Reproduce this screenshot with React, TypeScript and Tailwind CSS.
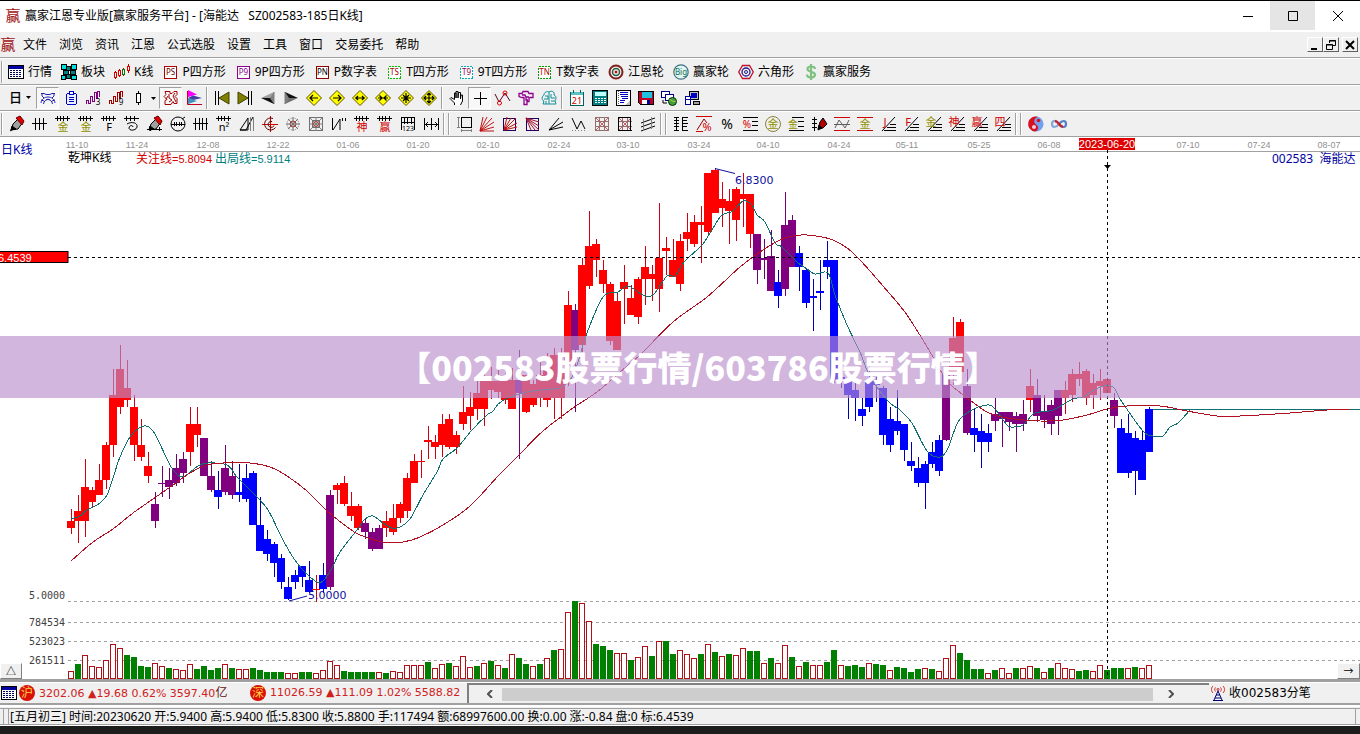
import type { ReactNode } from 'react';

const uiFont = 'font-["Noto_Sans","Noto_Sans_CJK_SC",sans-serif]';

const menus = ['文件', '浏览', '资讯', '江恩', '公式选股', '设置', '工具', '窗口', '交易委托', '帮助'];

const dates: [string, number][] = [
  ['11-10', 77], ['11-24', 137], ['12-08', 208], ['12-22', 278], ['01-06', 348], ['01-20', 418],
  ['02-10', 488], ['02-24', 559], ['03-10', 628], ['03-24', 699], ['04-10', 768], ['04-24', 839],
  ['05-11', 907], ['05-25', 979], ['06-08', 1049], ['07-10', 1188], ['07-24', 1259], ['08-07', 1329],
];

// kind, high, low, body top, body bottom
const candles = `
r 509 534 521 528|r 495 543 511 521|r 459 537 487 521|r 487 507 490 502|r 464 495 480 495
r 442 489 445 480|r 369 457 395 445|r 345 414 369 407|r 360 407 388 400|r 395 461 407 445
r 419 461 445 457|r 452 483 466 476|p 492 528 504 521|p 466 497 483 484|p 468 499 480 487
p 454 486 468 483|p 452 483 459 473|r 407 466 424 452|r 407 447 424 435|p 438 476 438 476
p 461 492 476 490|b 471 509 490 497|p 445 495 468 492|p 461 499 476 495|b 464 502 492 495
b 464 502 478 499|b 471 525 473 525|b 497 551 525 551|b 530 561 539 554|b 542 577 544 563
b 554 589 558 582|b 577 600 587 599|b 570 589 575 582|b 566 587 566 577|b 561 593 580 592
r 575 602 589 590|b 563 593 575 589|p 490 590 495 587|r 483 504 485 490|r 476 506 483 504
r 492 521 506 516|r 504 530 506 528|p 519 539 523 532|p 528 551 532 549|p 525 549 528 549
r 511 537 521 528|r 504 535 518 532|r 502 523 504 518|r 473 518 478 511|r 454 483 461 483
r 450 478 461 462|r 426 459 440 442|r 435 459 442 447|r 414 457 424 445|r 414 449 419 447
r 431 454 435 447|r 386 430 412 424|r 392 430 407 416|r 380 420 393 409|r 374 426 380 409
r 367 399 381 390|r 366 398 381 392|r 373 404 381 400|r 368 409 380 409|p 350 459 380 393
r 375 413 375 412|r 380 407 384 405|r 362 407 375 398|r 353 407 368 400|r 348 419 355 398
r 348 419 370 398|r 291 386 305 365|p 304 412 310 350|r 258 352 265 345|r 211 289 246 286
r 239 277 244 260|r 260 293 270 284|r 282 345 284 341|r 292 350 301 350|r 265 324 282 289
r 285 315 298 315|r 277 324 279 317|r 246 305 267 279|r 265 301 274 279|r 203 312 258 289
r 237 275 248 251|r 239 277 260 277|r 234 291 241 284|r 213 251 232 239|r 215 247 222 244
r 206 263 222 225|r 173 236 173 232|r 168 213 170 213|r 182 227 199 208|r 189 244 201 211
r 187 241 189 220|r 173 227 194 199|r 194 248 194 234|p 234 284 234 270|p 239 279 258 260
p 230 291 256 291|b 270 308 282 296|p 192 296 225 289|p 215 267 220 267|b 246 291 253 267
b 268 308 270 303|b 279 331 296 298|b 260 310 291 293|b 241 279 260 267|b 260 383 260 380
b 370 388 377 382|b 377 419 380 395|b 380 421 390 398|b 398 426 409 416|b 365 412 380 407
b 377 402 382 385|b 386 445 388 435|b 407 452 419 445|b 390 435 421 431|b 424 461 424 450
b 442 471 461 466|b 457 487 468 483|b 461 509 464 483|b 442 468 452 464|b 435 476 440 471
p 370 441 375 440|r 317 385 338 375|r 319 384 322 372|p 369 435 386 433|b 409 452 428 435
b 414 468 431 442|b 424 452 433 442|p 398 431 414 421|p 412 447 412 419|p 412 431 412 422
p 412 452 416 424|p 400 431 414 424|r 369 412 386 400|p 379 422 395 416|p 395 428 411 420
p 400 435 405 424|p 390 435 390 416|r 381 414 390 398|r 369 402 374 395|r 362 386 374 379
r 369 405 371 398|r 374 409 383 395|r 369 400 381 386|r 379 393 379 393|p 393 428 400 416
b 419 473 428 473|b 414 478 433 473|b 431 495 438 471|b 431 480 440 480|b 407 452 409 452`
  .trim()
  .split(/[|\n]/)
  .map((row) => {
    const [kind, ...v] = row.trim().split(' ');
    const [high, low, top, bottom] = v.map(Number);
    return { kind, high, low, top, bottom };
  });

// r = hollow up bar, g = solid down bar, number = top of the bar
const volumes = `
r671 g664 r655 r666 r667 r660 r644 r648 g655 g657 g666 g667 r663 r666 g668 r669 r670 r664 g669 g666
g670 g668 r664 g668 r669 r669 g668 g670 g672 g672 g672 r673 r673 g672 g672 r673 r670 r661 r665 g671
g672 g672 g672 g672 r672 g673 r671 r672 r665 r665 r665 g662 r668 r664 g663 r666 r656 r667 g666 r663
g661 r665 g668 r654 g658 g664 r666 g664 r658 g650 r649 r612 g601 r603 r621 g644 g646 g650 r653 r653
g660 r657 r646 g656 r641 g641 g654 r650 r654 r658 g654 r644 g652 r656 g654 r655 r648 g651 g651 r663
g658 r663 r645 g657 r666 g662 r665 r665 g662 g650 r665 g666 g665 g667 r663 g664 g665 r670 g667 g668
g672 g669 r668 g669 r671 r658 r645 g653 g660 g669 g669 r673 g670 r668 r673 g668 r668 r666 g668 r672
g668 r663 r668 r669 g671 g670 r671 r665 g670 g668 g668 r668 g667 r668 r665`
  .trim()
  .split(/\s+/);

const slowLine =
  '71,561 93,542 113,529 133,513 153,499 173,485 190,473 207,465 223,463 250,463 270,467 287,476 307,491 327,511 350,529 360,535 383,542 403,542 420,537 443,525 470,506 500,474 520,454 543,431 573,408 597,392 620,372 640,355 673,322 707,297 740,267 760,252 780,240 793,236 807,235 830,239 847,248 860,260 883,286 907,315 933,357 943,375 952,386 970,400 987,412 1007,418 1040,421 1063,420 1087,415 1107,409 1127,406 1160,406 1187,411 1217,416 1240,416 1290,413 1327,410 1350,410';

const fastLine =
  '71,519 80,516 87,510 100,503 107,495 113,478 120,457 130,437 141,427 149,427 156,436 170,465 178,475 185,476 198,466 208,463 227,465 237,477 253,493 268,510 283,540 297,563 315,581 323,581 332,568 340,552 357,530 365,519 373,516 383,523 392,528 400,527 410,519 423,495 437,472 443,459 457,448 472,430 487,415 493,411 502,401 527,392 553,389 560,388 570,380 577,365 587,333 603,297 618,292 628,286 643,295 653,295 667,276 675,276 685,261 702,245 713,228 722,215 733,211 743,201 752,205 757,215 765,222 775,243 782,247 797,262 807,269 815,274 828,273 835,295 847,325 860,352 867,370 877,387 890,403 900,410 912,423 927,451 940,457 948,448 958,422 970,411 987,405 995,409 1007,425 1013,427 1023,425 1033,414 1040,412 1053,410 1073,399 1083,397 1100,387 1113,387 1122,402 1143,431 1153,436 1163,436 1170,427 1178,423 1190,410';

// rounds the corners of a list of points into one smooth path
function smooth(points: string) {
  const p = points.split(' ').map((s) => s.split(',').map(Number));
  let d = `M${p[0][0]} ${p[0][1]}`;
  for (let i = 0; i < p.length - 1; i++) {
    const a = p[i - 1] ?? p[i];
    const b = p[i];
    const c = p[i + 1];
    const e = p[i + 2] ?? c;
    d += `C${b[0] + (c[0] - a[0]) / 6} ${b[1] + (c[1] - a[1]) / 6} ${c[0] - (e[0] - b[0]) / 6} ${c[1] - (e[1] - b[1]) / 6} ${c[0]} ${c[1]}`;
  }
  return d;
}

const fills: Record<string, string> = { r: '#ff0000', p: '#800080', b: '#0000ff' };
const wicks: Record<string, string> = { r: '#d00010', p: '#700070', b: '#0000b0' };

function Ico({ children, crisp = true }: { children: ReactNode; crisp?: boolean }) {
  return (
    <svg
      viewBox="0 0 16 16"
      className="h-4 w-4 shrink-0 overflow-visible"
      fill="none"
      stroke="#000"
      aria-hidden="true"
      shapeRendering={crisp ? 'crispEdges' : 'auto'}
    >
      {children}
    </svg>
  );
}

// single glyph used as part of an icon
function Glyph({ x = 8, y = 14, size = 9, color = '#000', children }: { x?: number; y?: number; size?: number; color?: string; children: ReactNode }) {
  return (
    <text x={x} y={y} fontSize={size} fill={color} stroke="none" textAnchor="middle" className={uiFont}>
      {children}
    </text>
  );
}

const Win = () => <Ico><Glyph size={15} y={13} color="#a01010">赢</Glyph></Ico>;

const TableIcon = () => (
  <Ico>
    <rect x="0" y="1" width="16" height="14" fill="#000" stroke="none" />
    <rect x="1" y="2" width="14" height="12" fill="#fff" stroke="none" />
    <rect x="1" y="2" width="14" height="3" fill="#0000a0" stroke="none" />
    <path d="M2 6.500h12M2 8.500h12M2 10.500h12M2 12.500h12" stroke="#000060" strokeDasharray="2 1" />
  </Ico>
);

const Tag = ({ text, color, ink, dashed = false }: { text: string; color: string; ink: string; dashed?: boolean }) => (
  <Ico>
    <rect x="2.500" y="2.500" width="12" height="12" fill="#fff" stroke={color} strokeDasharray={dashed ? '2 1' : undefined} />
    <Glyph x={8.5} y={11} size={8} color={ink}>{text}</Glyph>
  </Ico>
);

const mainTools: { label: string; icon: ReactNode }[] = [
  { label: '行情', icon: <TableIcon /> },
  {
    label: '板块',
    icon: (
      <Ico>
        <g fill="#008080">
          <rect x="0.500" y="0.500" width="5" height="5" fill="#00e0e0" /><rect x="5.500" y="2.500" width="4" height="4" />
          <rect x="10.500" y="0.500" width="5" height="5" fill="#00e0e0" /><rect x="2.500" y="6.500" width="5" height="4" />
          <rect x="9.500" y="6.500" width="5" height="4" /><rect x="0.500" y="11.500" width="4" height="4" fill="#00e0e0" />
          <rect x="5.500" y="10.500" width="4" height="4" /><rect x="10.500" y="11.500" width="5" height="4" fill="#00e0e0" />
        </g>
      </Ico>
    ),
  },
  {
    label: 'K线',
    icon: (
      <Ico>
        <path d="M1.500 7v8M5.500 5v8M9.500 4v8M14.500 0v9" stroke="#c00000" />
        <rect x="0.500" y="8.500" width="2" height="5" fill="#fff" stroke="#e00000" />
        <rect x="4.500" y="6.500" width="2" height="5" fill="#fff" stroke="#e00000" />
        <rect x="8.500" y="5.500" width="2" height="5" fill="#fff" stroke="#008000" />
        <rect x="13.500" y="2.500" width="2" height="4" fill="#fff" stroke="#e00000" />
      </Ico>
    ),
  },
  { label: 'P四方形', icon: <Tag text="PS" color="#b00000" ink="#600000" /> },
  { label: '9P四方形', icon: <Tag text="P9" color="#900090" ink="#900090" /> },
  { label: 'P数字表', icon: <Tag text="PN" color="#900000" ink="#000" /> },
  { label: 'T四方形', icon: <Tag text="TS" color="#00c000" ink="#a00000" dashed /> },
  { label: '9T四方形', icon: <Tag text="T9" color="#00b0b0" ink="#900050" dashed /> },
  { label: 'T数字表', icon: <Tag text="TN" color="#00a000" ink="#b00000" dashed /> },
  {
    label: '江恩轮',
    icon: (
      <Ico crisp={false}>
        <circle cx="8" cy="8" r="6.500" stroke="#802020" strokeWidth="2" />
        <circle cx="8" cy="8" r="3.500" stroke="#206040" strokeWidth="1.500" />
        <circle cx="8" cy="8" r="1" fill="#c00000" stroke="#c00000" />
      </Ico>
    ),
  },
  {
    label: '赢家轮',
    icon: (
      <Ico crisp={false}>
        <circle cx="8" cy="8" r="7.200" fill="#e0f4f4" stroke="#407080" strokeWidth="1.200" />
        <Glyph y={11} size={8} color="#107050">Big</Glyph>
      </Ico>
    ),
  },
  {
    label: '六角形',
    icon: (
      <Ico crisp={false}>
        <path d="M4.500 1.500h7L15.300 8l-3.800 6.500h-7L.700 8z" stroke="#c01030" strokeWidth="1.300" />
        <circle cx="8" cy="8" r="4" stroke="#202090" strokeWidth="1.300" />
        <circle cx="8" cy="8" r="1.500" stroke="#202090" />
      </Ico>
    ),
  },
  {
    label: '赢家服务',
    icon: (
      <Ico crisp={false}>
        <path d="M12 5c0-2-2-2.500-4-2.500S4.500 3.500 4.500 5s1.500 2.200 3.500 2.700 4 1.300 4 3-2 2.800-4 2.800-4-1-4-3M8 0v16" stroke="#80c080" strokeWidth="2.200" />
      </Ico>
    ),
  },
];

const Diamond = ({ d }: { d: string }) => (
  <Ico crisp={false}>
    <path d="M8 .500L15.500 8 8 15.500.500 8z" fill="#ffff00" stroke="#605000" />
    <path d={d} strokeWidth="1.200" />
  </Ico>
);

const Wave = ({ n, color }: { n: string; color: string }) => (
  <Ico>
    <path d="M0.500 14v-4h2v3h2V6h2v5h2V2h2v6h1V1h2v6" stroke={color} />
    <Glyph x={12} y={15} size={8}>{n}</Glyph>
  </Ico>
);

const Caret = () => <svg viewBox="0 0 5 3" className="h-[3px] w-[5px]" aria-hidden="true"><path d="M0 0h5L2.500 3z" /></svg>;

const periodTools: { name: string; icon: ReactNode; on?: boolean }[] = [
  {
    name: '同心圆',
    on: true,
    icon: (
      <Ico crisp={false}>
        <g stroke="#2020b0">
          <path d="M1 3.500h3l2 1h4l2-1h3M2 3v3l2 2M14 3v3l-2 2M1 13c1-8 13-8 14 0M3.500 14c1-6 8-6 9 0M1 10l3 1M15 10l-3 1M6 10c1-1 3-1 4 0" />
        </g>
      </Ico>
    ),
  },
  {
    name: '剪贴板',
    icon: (
      <Ico>
        <g stroke="#0000c0">
          <rect x="3.500" y="3.500" width="10" height="11" rx="2" fill="#e8f0ff" />
          <rect x="6.500" y="1.500" width="4" height="3" fill="#fff" />
          <path d="M6 7.500h5M6 9.500h5M6 11.500h5" />
        </g>
      </Ico>
    ),
  },
  { name: '三浪', icon: <Wave n="3" color="#800080" /> },
  { name: '九浪', icon: <Wave n="9" color="#a00000" /> },
];

const wheelTools: { name: string; icon: ReactNode; on?: boolean }[] = [
  {
    name: '缠绕',
    on: true,
    icon: (
      <Ico crisp={false}>
        <path d="M2 1.500h5v2h2l2-2h3v3l-2 2 2 2v5h-3l-1-2-2 3H2v-4l2-1-3-3 2-2zM6 4v4l3 2-3 2M12 3l-2 3 3 6M5 6L3 9" stroke="#a00000" />
      </Ico>
    ),
  },
  {
    name: '色带',
    icon: (
      <Ico crisp={false}>
        <path d="M2 0l9 4.500L2 7z" fill="#ff00ff" stroke="none" />
        <path d="M2 8l5-2.500L16 8l-9 2z" fill="#4040a0" stroke="none" />
        <path d="M2 8l9 3-9 3z" fill="#4090c0" stroke="none" />
        <path d="M1.500 1v13.500H16" stroke="#c00020" />
      </Ico>
    ),
  },
];

const moveTools: { name: string; icon: ReactNode }[] = [
  { name: '首页', icon: <Ico crisp={false}><path d="M1.500 1v14M4.500 1v14" /><path d="M15 2v12L5 8z" fill="#808000" stroke="#404000" /></Ico> },
  { name: '末页', icon: <Ico crisp={false}><path d="M14.500 1v14M11.500 1v14" /><path d="M1 2v12l10-6z" fill="#808000" stroke="#404000" /></Ico> },
  { name: '后退', icon: <Ico crisp={false}><path d="M14 2v12l-4-6z" fill="#808080" stroke="#808080" /><path d="M14 2L1 8h9z" fill="#a0a0a0" stroke="none" /><path d="M14 14L1 8h9z" fill="#101010" stroke="none" /></Ico> },
  { name: '前进', icon: <Ico crisp={false}><path d="M2 2v12l4-6z" fill="#808080" stroke="#808080" /><path d="M2 2l13 6H6z" fill="#101010" stroke="none" /><path d="M2 14l13-6H6z" fill="#707070" stroke="none" /></Ico> },
  { name: '左移', icon: <Diamond d="M4 8h8M7 5L4 8l3 3" /> },
  { name: '右移', icon: <Diamond d="M4 8h8M9 5l3 3-3 3" /> },
  { name: '横向放大', icon: <Diamond d="M3 8h10M6 6L4 8l2 2M10 6l2 2-2 2" /> },
  { name: '横向缩小', icon: <Diamond d="M3 8h10M4.500 5.500L7 8l-2.500 2.500M11.500 5.500L9 8l2.500 2.500" /> },
  { name: '全部缩小', icon: <Diamond d="M3 8h10M8 3v10M5 5l6 6M11 5l-6 6" /> },
  { name: '全部放大', icon: <Diamond d="M3 8h10M8 3v10M6 5l2-2 2 2M6 11l2 2 2-2M5 6L3 8l2 2M11 6l2 2-2 2" /> },
];

const pointerTools: { name: string; icon: ReactNode; on?: boolean }[] = [
  { name: '拖动', icon: <Ico crisp={false}><path d="M5.500 15v-2L1 8.500l1-1 3.500 2V3h1.500v5V1.500h2V8l.500-5.500h2V9l.500-4h1.500v6l-2 4" fill="#fff" /></Ico> },
  { name: '十字光标', on: true, icon: <Ico><path d="M8.500 2v13M2 8.500h13" /></Ico> },
  { name: '折线', icon: <Ico crisp={false}><path d="M0 4l4 8 6-9 5 8" stroke="#600020" /><circle cx="4.500" cy="13" r="2" stroke="#e00000" /><circle cx="10" cy="3" r="2" stroke="#e00000" /></Ico> },
  { name: '形态', icon: <Ico crisp={false}><path d="M1 3.500h3l1-2h5l1 2h4v4h-3l-1 1v3H9v3H6v-7H4l-3-1zM4 5h3l1 2h3M8 7v3h2" stroke="#900090" strokeWidth="1.300" /></Ico> },
  { name: '云图', icon: <Ico crisp={false}><path d="M3 5c0-3 3-4 5-3 3-2 6 0 5 3 3 1 2 5 1 6l1 3H2l1-3c-3-1-2-5 0-6zM4 6h3v3H3M8 2v12M10 4v4h4M10 11h4M5 11v3" stroke="#10909a" /></Ico> },
];

const systemTools: { name: string; icon: ReactNode }[] = [
  { name: '日历', icon: <Ico><rect x="1.500" y="2.500" width="13" height="13" fill="#fff" stroke="#006060" /><rect x="2" y="2" width="12" height="3" fill="#60c0c0" stroke="none" /><path d="M4.500 0v3M11.500 0v3" stroke="#006060" /><Glyph y={14} size={9} color="#d00000">21</Glyph></Ico> },
  { name: '计算器', icon: <Ico><rect x="0.500" y="0.500" width="15" height="15" fill="#008080" /><rect x="3" y="2" width="11" height="4" fill="#c0ffff" stroke="none" /><path d="M3 8.500h11M3 10.500h11M3 12.500h11" stroke="#fff" strokeDasharray="2 1" /></Ico> },
  { name: '记事本', icon: <Ico><rect x="1.500" y="0.500" width="14" height="15" fill="#fff" /><path d="M3.500 1v14" stroke="#606060" strokeDasharray="1 1" /><path d="M5 2.500h8M5 4.500h8M6 6.500h7M7 8.500h6M5 10.500h5M5 12.500h4" stroke="#0000c0" /><path d="M10 15l5-5v5z" fill="#c0c0c0" stroke="none" /></Ico> },
  { name: '保存', icon: <Ico><path d="M0.500 1.500h15v13h-13l-2-2z" fill="#c00020" /><rect x="4" y="2" width="10" height="6" fill="#20c0e0" stroke="none" /><rect x="4" y="10" width="8" height="4" fill="#fff" stroke="none" /><rect x="9" y="10" width="3" height="4" fill="#0000a0" stroke="none" /></Ico> },
  { name: '网络', icon: <Ico crisp={false}><rect x="0.500" y="1.500" width="8" height="6" fill="#fff" stroke="#000080" /><rect x="4.500" y="4.500" width="8" height="6" fill="#fff" stroke="#000080" /><path d="M2 10v3h4" /><circle cx="11.500" cy="11.500" r="4" fill="#40a040" stroke="#003000" /><path d="M8.500 10c2-1 3 3 6 1" stroke="#d0d040" /></Ico> },
  { name: '连接', icon: <Ico><rect x="5.500" y="1.500" width="9" height="8" fill="#c0c0c0" /><rect x="7" y="3" width="6" height="5" fill="#0000c0" stroke="none" /><rect x="9.500" y="11.500" width="6" height="3" fill="#a0a0a0" /><rect x="1.500" y="6.500" width="5" height="8" fill="#fff" stroke="#0000a0" /><path d="M2 9.500h4" stroke="#0000a0" /></Ico> },
];

const Ruler = ({ glyph, color = '#000', size = 11 }: { glyph: string; color?: string; size?: number }) => (
  <Ico>
    <path d="M0 2.500h15M2.500 0v5M5.500 0v5M8.500 0v5M12.500 0v5" />
    <Glyph y={15} size={size} color={color}>{glyph}</Glyph>
  </Ico>
);

const Pen = ({ extra }: { extra: string }) => (
  <Ico crisp={false}>
    <path d="M2 14l2-6 6-6 4 4-5 7z" fill="#a0a0a0" />
    <path d="M7 2l4-2 4 5-2 4z" fill="#e00000" stroke="#600000" />
    <path d="M2 14l5-1-4-3z" fill="#000" />
    <path d={extra} />
  </Ico>
);

const drawTools: { name: string; icon: ReactNode }[] = [
  { name: '画笔', icon: <Pen extra="M1 15l3-2" /> },
  { name: '等分线', icon: <Ico><path d="M0 7.500h15M3.500 2v12M7.500 2v12M11.500 2v12" /></Ico> },
  { name: '黄金周期', icon: <Ruler glyph="金" color="#909000" /> },
  { name: '黄金分割', icon: <Ruler glyph="金" color="#909000" /> },
  { name: '斐波那契', icon: <Ruler glyph="F" /> },
  { name: '螺旋', icon: <Ico crisp={false}><path d="M0 2.500h15M2.500 0v5M6.500 0v5M10.500 0v5M3 8c5-3 11-1 10 3s-8 4-8 1 4-3 4-1" /></Ico> },
  { name: '标注笔', icon: <Pen extra="M0 13.500h15M3.500 11v4M12.500 11v4" /> },
  { name: '圆周', icon: <Ico crisp={false}><circle cx="8" cy="8" r="7" /><path d="M1 8.500h14M4.500 6v4M6.500 6v4M9.500 6v4M11.500 6v4M12 3l3-2" /></Ico> },
  { name: '周期线', icon: <Ico><path d="M0 7.500h15M2.500 2v12M6.500 2v12M9.500 2v12M13.500 2v12" /></Ico> },
  { name: '平方周期', icon: <Ruler glyph="n²" /> },
  { name: '角度镜', icon: <Ico crisp={false}><path d="M1 14L9 2v12zM1 14h6L14 1" /><path d="M11.500 1v14M14.500 1v14" stroke="#808080" /></Ico> },
  { name: '圆心', icon: <Ico crisp={false}><path d="M0 8.500h16M8.500 0v16" stroke="#d00000" /><path d="M11 2.500a6 6 0 1 0 2.500 9M10 5.500a3 3 0 1 0 2 4" stroke="#600000" /></Ico> },
  { name: '极坐标', icon: <Ico crisp={false}><path d="M1 8h14M8 1v14M3 3l10 10M13 3L3 13" stroke="#707070" /><circle cx="8" cy="8" r="6" stroke="#808080" strokeDasharray="1 1" /><circle cx="8" cy="8" r="3" stroke="#a04040" /></Ico> },
  { name: '九宫', icon: <Ico crisp={false}><rect x="1.500" y="1.500" width="13" height="13" stroke="#707070" /><path d="M1 8h14M8 1v14M2 2l12 12M14 2L2 14" stroke="#808080" /><rect x="4.500" y="4.500" width="7" height="7" stroke="#707070" /><circle cx="8" cy="8" r="2.500" stroke="#b03030" /></Ico> },
  { name: '摆动', icon: <Ico crisp={false}><path d="M1.500 2v12M2 14L9 3v11M11.500 2v3M14.500 2v3" /></Ico> },
  { name: '神', icon: <Ruler glyph="神" color="#d00000" /> },
  { name: '赢', icon: <Ruler glyph="赢" color="#d00000" /> },
  { name: '数字周期', icon: <Ico><path d="M1.500 14V1.500h13V14M1 6.500h14M4.500 2v6M7.500 2v6M11.500 2v6" /><Glyph x={8} y={15} size={7}>123</Glyph></Ico> },
  { name: '宽度', icon: <Ico crisp={false}><path d="M1.500 2v12M8.500 2v12M15.500 2v12M1 8.500h14M5 6L2.500 8.500 5 11M12 6l2.500 2.500L12 11" /></Ico> },
];

const fanTools: { name: string; icon: ReactNode }[] = [
  { name: '矩形', icon: <Ico><rect x="5.500" y="1.500" width="10" height="10" /><path d="M1 1.500h3M1 11.500h3M2.500 2v10M5 14.500h10M5.500 13v3M15.500 13v3" stroke="#808080" /></Ico> },
  { name: '扇形', icon: <Ico crisp={false}><path d="M1 15L4 1M1 15L8 1M1 15L13 2M1 15l14-9M1 15l14-4M1 15h14" stroke="#c01010" /></Ico> },
  { name: '箱体扇形', icon: <Ico crisp={false}><rect x="1.500" y="2.500" width="12" height="12" stroke="#200060" /><path d="M2 14L5 1M2 14L9 2M2 14L14 2M2 14l13-7M2 14l13-3" stroke="#c01010" /></Ico> },
  { name: '反向扇形', icon: <Ico crisp={false}><rect x="1.500" y="2.500" width="12" height="12" stroke="#200060" /><path d="M1 2l5 12M1 2l9 12M1 2l13 12M1 2l13 8M1 2l13 4" stroke="#a01030" /></Ico> },
  { name: '速阻线', icon: <Ico crisp={false}><path d="M1 14L11 2M1 14l14-8M1 14l14-3" /></Ico> },
  { name: '波浪', icon: <Ico crisp={false}><path d="M1 2l5 11 4-8 4 8" /><path d="M1 14.500h14" stroke="#808080" strokeDasharray="1 2" /></Ico> },
  { name: '网格', icon: <Ico><path d="M1.500 1.500h13v13h-13zM5.500 1v14M10.500 1v14M1 5.500h14M1 10.500h14" stroke="#907070" /><path d="M2 14L14 2M2 2l12 12" stroke="#c06060" /></Ico> },
  { name: '坐标网格', icon: <Ico><path d="M5.500 1v14M10.500 1v14M1 5.500h14M1 10.500h14" stroke="#907070" /><path d="M2 2l12 12M2 14L14 2" stroke="#c06060" /><path d="M1.500 1v13.500H15M1 1.500h12v13" /></Ico> },
  { name: '平行线', icon: <Ico crisp={false}><path d="M1 7l14-5M1 11l14-5M1 15l14-5" /><path d="M3.500 3v12M11.500 1v12" stroke="#808080" /></Ico> },
];

const Steps = ({ glyph, color = '#d00000' }: { glyph: string; color?: string }) => (
  <Ico crisp={false}>
    <path d="M2 15L15 1M4 14.500h12M7 11.500h9M10 8.500h6" />
    <Glyph x={5} y={10} size={11} color={color}>{glyph}</Glyph>
  </Ico>
);

const ratioTools: { name: string; icon: ReactNode }[] = [
  { name: '刻度', icon: <Ico><path d="M3.500 1v14M9.500 1v14M1 1.500h5M1 4.500h5M1 7.500h5M1 10.500h5M1 14.500h5M9 1.500h6M9 4.500h5M9 7.500h6M9 10.500h5M9 14.500h6" /></Ico> },
  { name: '百分比区间', icon: <Ico crisp={false}><path d="M0 .500h16M0 15.500h7" stroke="#d00000" /><path d="M1 14L8 3l3 4" stroke="#900000" /><Glyph x={11} y={15} size={11} color="#d00000">%</Glyph></Ico> },
  { name: '百分比', icon: <Ico><Glyph y={13} size={14}>%</Glyph></Ico> },
  { name: '百分比线', icon: <Ico><path d="M1 1.500h15M10 5.500h6M10 9.500h6M1 14.500h15" /><Glyph x={5} y={12} size={10} color="#d00000">%</Glyph></Ico> },
  { name: '黄金圆', icon: <Ico crisp={false}><circle cx="8" cy="8" r="7.500" stroke="#908040" /><Glyph y={12} size={11} color="#909000">金</Glyph></Ico> },
  { name: '黄金线', icon: <Ico><path d="M4 1.500h12M10 5.500h6M10 10.500h6M1 14.500h15" /><Glyph x={5} y={12} size={10} color="#909000">金</Glyph></Ico> },
  { name: '测量笔', icon: <Ico crisp={false}><path d="M3.500 1v14M1 3.500h5M1 7.500h5M1 11.500h5" /><path d="M7 13l2-7 3-4 4 6-4 4z" fill="#b00000" /><path d="M7 14l1-5 3 3z" fill="#000" /></Ico> },
  { name: '波动区间', icon: <Ico crisp={false}><path d="M0 1.500h16M0 14.500h16" stroke="#d00000" /><path d="M0 8.500h16M1 12l4-8 6 8 4-8" stroke="#606060" /></Ico> },
  { name: '黄金区间', icon: <Ico><path d="M0 1.500h16M0 14.500h16" stroke="#d00000" /><Glyph y={12} size={11} color="#909000">金</Glyph></Ico> },
  { name: '江恩角', icon: <Steps glyph="J" /> },
  { name: 'F角', icon: <Steps glyph="F" /> },
  { name: '金角', icon: <Steps glyph="金" color="#909000" /> },
  { name: '神角', icon: <Steps glyph="神" /> },
  { name: '赢角', icon: <Steps glyph="赢" /> },
  { name: '四角', icon: <Steps glyph="四" /> },
];

const extraTools: { name: string; icon: ReactNode }[] = [
  { name: '太极', icon: <Ico crisp={false}><circle cx="8" cy="8" r="7.500" fill="#70a0f0" stroke="none" /><path d="M10 .8A7.500 7.500 0 1 0 7 15.400c4-1 4-5 1-7s-2-6 2-7.600z" fill="#d81020" stroke="none" /><circle cx="10.500" cy="4.500" r="1.800" fill="#d81020" stroke="none" /><circle cx="6" cy="11" r="2" fill="#f0d0e0" stroke="none" /></Ico> },
  { name: '循环', icon: <Ico crisp={false}><path d="M8 8c3-4 7-4 7 0s-4 4-7 0" stroke="#5080c8" strokeWidth="2.200" /><path d="M8 8c-3-4-7-4-7 0s4 4 7 0" stroke="#80a8d8" strokeWidth="2.200" /><path d="M4 5c4 0 4 6 8 6" stroke="#c82030" strokeWidth="2.400" /></Ico> },
];

function Tools({ items }: { items: { name: string; icon: ReactNode; on?: boolean }[] }) {
  return (
    <>
      {items.map((t, i) => (
        <button
          key={i}
          type="button"
          aria-label={t.name}
          className={
            t.on
              ? 'flex h-[22px] w-[23px] items-center justify-center border border-t-[#a0a0a0] border-l-[#a0a0a0] border-r-white border-b-white bg-[#f8f8f8]'
              : 'flex h-[22px] w-[23px] items-center justify-center'
          }
        >
          {t.icon}
        </button>
      ))}
    </>
  );
}

const Grip = () => <span className="mr-[2px] ml-px h-[22px] w-[2px] border-l border-[#a0a0a0] bg-white" />;

function TitleBar() {
  return (
    <header className="flex h-[31px] items-start bg-white">
      <div className="flex h-[30px] flex-1 items-center gap-1 pl-[5px] text-black">
        <Win />
        <h1 className="text-xs whitespace-pre">赢家江恩专业版[赢家服务平台] - [海能达   SZ002583-185日K线]</h1>
      </div>
      <button type="button" aria-label="最小化" className="flex h-[29px] w-[45px] items-center justify-center">
        <svg viewBox="0 0 10 10" className="h-[10px] w-[10px]" stroke="#000"><path d="M0 5.500h10" /></svg>
      </button>
      <button type="button" aria-label="最大化" className="flex h-[29px] w-[45px] items-center justify-center bg-[#e5e5e5]">
        <svg viewBox="0 0 10 10" className="h-[10px] w-[10px]" stroke="#000" fill="none"><path d="M.5 .5h9v9h-9z" /></svg>
      </button>
      <button type="button" aria-label="关闭" className="flex h-[29px] w-[45px] items-center justify-center">
        <svg viewBox="0 0 10 10" className="h-[10px] w-[10px]" stroke="#000"><path d="M0 0l10 10M10 0L0 10" /></svg>
      </button>
    </header>
  );
}

const mdiButton = 'flex h-[15px] w-4 items-center justify-center border border-t-white border-l-white border-r-[#606060] border-b-[#606060] bg-[#f0f0f0]';

function MenuBar() {
  return (
    <nav className="flex h-[26px] items-center border-b border-[#a0a0a0]">
      <Win />
      <div className="ml-[7px] flex flex-1 gap-3">
        {menus.map((m) => (
          <button key={m} type="button">{m}</button>
        ))}
      </div>
      <button type="button" aria-label="最小化窗口" className={mdiButton}>
        <svg viewBox="0 0 10 10" className="h-[10px] w-[10px]"><path d="M1 8h6v2H1z" /></svg>
      </button>
      <button type="button" aria-label="还原窗口" className={mdiButton}>
        <svg viewBox="0 0 10 10" className="h-[10px] w-[10px]" fill="none" stroke="#000"><path d="M3.500 3V.5h6v5H7M3 1h7M.5 4.500h6v5h-6zM0 5h7" /></svg>
      </button>
      <button type="button" aria-label="关闭窗口" className={mdiButton + ' mr-[2px] ml-[3px]'}>
        <svg viewBox="0 0 10 10" className="h-[10px] w-[10px]" stroke="#000" strokeWidth="2"><path d="M1 1l8 8M9 1L1 9" /></svg>
      </button>
    </nav>
  );
}

function Toolbars() {
  return (
    <>
      <div className="flex h-[27px] items-center border-t border-b border-t-white border-b-[#a0a0a0]">
        <Grip />
        <div className="ml-[3px] flex gap-[9px]">
          {mainTools.map((t) => (
            <button key={t.label} type="button" className="flex items-center gap-1">
              {t.icon}
              <span>{t.label}</span>
            </button>
          ))}
        </div>
      </div>
      <div className="flex h-[26px] items-center border-t border-b border-t-white border-b-[#a0a0a0]">
        <button type="button" aria-label="日线周期" className="flex items-center gap-1 pr-[5px] pl-[9px]">
          <span className="text-[13px] font-medium">日</span>
          <Caret />
        </button>
        <Tools items={periodTools} />
        <button type="button" aria-label="K线样式" className="flex items-center gap-1 px-[3px]">
          <Ico><path d="M7.500 1v14" /><rect x="5.500" y="3.500" width="4" height="9" fill="#fff" /></Ico>
          <Caret />
        </button>
        <Tools items={wheelTools} />
        <Grip />
        <Tools items={moveTools} />
        <Grip />
        <Tools items={pointerTools} />
        <Grip />
        <Tools items={systemTools} />
      </div>
      <div className="flex h-[26px] items-center border-t border-b border-t-white border-b-[#a0a0a0]">
        <Grip />
        <Tools items={drawTools} />
        <Grip />
        <Grip />
        <Tools items={fanTools} />
        <Grip />
        <Grip />
        <Tools items={ratioTools} />
        <Grip />
        <Grip />
        <Tools items={extraTools} />
      </div>
    </>
  );
}

function Chart() {
  return (
    <main className="relative bg-white">
      <svg className="block h-[542px] w-full overflow-hidden" role="img" aria-label="海能达 002583 日K线">
        <g transform="translate(0 -137)">
          {/* Date axis */}
          <g className='font-["Liberation_Sans",sans-serif]'>
            {dates.map(([label, x]) => (
              <text key={label} x={x} y="148" fontSize="9" fill="#909090" textAnchor="middle">{label}</text>
            ))}
            <line x1="68" x2="100%" y1="151.5" y2="151.5" stroke="#a0a0a0" />
            <rect x="1079" y="138" width="56" height="12" fill="#e00000" />
            <text x="1107" y="148" fontSize="11" fill="#fff" textAnchor="middle">2023-06-20</text>
          </g>

          <g className={uiFont} fontSize="12">
            <text x="1" y="154" fill="#0000a0">日K线</text>
            <text x="68" y="162">乾坤K线</text>
            <text x="1272" y="163" fill="#0000a0" xmlSpace="preserve">002583  海能达</text>
          </g>
          <g className='font-["Liberation_Sans","Noto_Sans_CJK_SC",sans-serif]' fontSize="11">
            <text x="136" y="163" fill="#d00000"><tspan fontSize="12">关注线</tspan>=5.8094</text>
            <text x="215" y="163" fill="#008080"><tspan fontSize="12">出局线</tspan>=5.9114</text>
          </g>

          {/* Guide lines */}
          {[601.5, 622.5, 641.5, 660.5].map((y) => (
            <line key={y} x1="68" x2="100%" y1={y} y2={y} stroke="#a0a0a0" strokeDasharray="3 3" />
          ))}
          <g className='font-["DejaVu_Sans_Mono",monospace]' fontSize="10" fill="#404040" textAnchor="end">
            <text x="65" y="599">5.0000</text>
            <text x="65" y="626">784534</text>
            <text x="65" y="645">523023</text>
            <text x="65" y="664">261511</text>
          </g>

          {/* Candles */}
          <g shapeRendering="crispEdges">
            {candles.map((c, i) => (
              <g key={i}>
                <rect x={71 + i * 7} y={c.high} width="1" height={c.low - c.high} fill={wicks[c.kind]} />
                <rect x={67 + i * 7} y={c.top} width="8" height={c.bottom - c.top} fill={fills[c.kind]} />
              </g>
            ))}
          </g>

          {/* Volume */}
          <g shapeRendering="crispEdges">
            {volumes.map((v, i) => {
              const top = Number(v.slice(1));
              return v[0] === 'g' ? (
                <rect key={i} x={68 + i * 7} y={top} width="6" height={679 - top} fill="#008000" />
              ) : (
                <rect key={i} x={68.5 + i * 7} y={top + 0.5} width="5" height={678 - top} fill="#fff" stroke="#b01018" />
              );
            })}
          </g>

          {/* Averages */}
          <g fill="none" strokeWidth="1" shapeRendering="crispEdges">
            <path d={smooth(fastLine)} stroke="#107070" />
            <line x1="1153" x2="100%" y1="409.5" y2="409.5" stroke="#107070" />
            <path d={smooth(slowLine)} stroke="#b01020" />
          </g>

          {/* High and low marks */}
          <g className='font-["DejaVu_Sans",sans-serif]' fontSize="11" fill="#1010a0">
            <path d="M715 168.500l20 5M289 601l18-5" stroke="#1010a0" fill="none" />
            <text x="735" y="184">6.8300</text>
            <text x="308" y="599">5.0000</text>
          </g>

          {/* Crosshair */}
          <g stroke="#000" strokeDasharray="3 3">
            <line x1="68" x2="100%" y1="257.5" y2="257.5" />
            <line x1="1107.5" x2="1107.5" y1="150" y2="679" />
          </g>
          <path d="M1104 165h7l-3.500 4z" />
          <rect x="-1" y="251.500" width="69" height="11" fill="#ff0000" stroke="#000" />
          <text x="-2" y="262" fontSize="11" fill="#fff" className='font-["Liberation_Sans",sans-serif]'>6.4539</text>
        </g>
      </svg>

      <div className="absolute inset-x-0 top-[199px] flex h-[62px] items-center justify-center bg-[rgb(186,143,204)]/65 pl-9">
        <p className='font-["Noto_Sans_CJK_SC",sans-serif] text-[34px] leading-none font-black whitespace-nowrap text-white'>
          【002583股票行情/603786股票行情】
        </p>
      </div>

      <button type="button" className="absolute bottom-0 left-0 h-4 w-[22px] border border-t-white border-l-white border-r-[#808080] border-b-[#808080] bg-[#f0f0f0] text-[10px] leading-none text-black">△</button>
      <button type="button" className="absolute right-0 bottom-0 h-4 w-[23px] border border-t-white border-l-white border-r-[#808080] border-b-[#808080] bg-[#f0f0f0] text-[10px] leading-none text-black">→</button>
    </main>
  );
}

const Badge = ({ text }: { text: string }) => (
  <Ico crisp={false}>
    <circle cx="8" cy="8" r="8" fill="#d81008" stroke="none" />
    <Glyph y={12} size={12} color="#ffd040">{text}</Glyph>
  </Ico>
);

function StatusBars() {
  return (
    <footer>
      <div className="h-[3px] bg-[#a0a0a0]" />
      <div className="flex h-[21px] items-center border-t border-white">
        <div className='flex w-[467px] shrink-0 items-center gap-[2px] overflow-hidden pl-px font-["DejaVu_Sans","Noto_Sans_CJK_SC",sans-serif] text-[11px] whitespace-nowrap text-[#d02020]'>
          <TableIcon />
          <Badge text="沪" />
          <span className="w-[211px] pl-[2px]">3202.06 ▲19.68 0.62% 3597.40<span className="text-xs text-[#601010]">亿</span></span>
          <Badge text="深" />
          <span className="pl-[2px]">11026.59 ▲111.09 1.02% 5588.82</span>
        </div>
        <div className="flex h-full flex-1 items-center border-t-2 border-l-2 border-[#808080] bg-[#f0f0f0]">
          <button type="button" aria-label="向左滚动" className="flex w-[33px] justify-center pl-2">
            <svg viewBox="0 0 6 8" className="h-2 w-[6px]" fill="none" stroke="#505050" strokeWidth="2"><path d="M5 0L1 4l4 4" /></svg>
          </button>
          <div className="h-[13px] flex-1 bg-[#cdcdcd]" />
          <button type="button" aria-label="向右滚动" className="flex w-[56px] pl-[15px]">
            <svg viewBox="0 0 6 8" className="h-2 w-[6px]" fill="none" stroke="#505050" strokeWidth="2"><path d="M1 0l4 4-4 4" /></svg>
          </button>
        </div>
        <div className='flex w-[151px] shrink-0 items-center gap-[3px] pl-px font-["DejaVu_Sans","Noto_Sans_CJK_SC",sans-serif]'>
          <Ico crisp={false}>
            <path d="M3 1C1 3 1 6 3 8M13 1c2 2 2 5 0 7M5.500 2.500c-1 1-1 3 0 4M10.500 2.500c1 1 1 3 0 4" stroke="#d02020" />
            <circle cx="8" cy="4.500" r="1" stroke="#c02020" />
            <path d="M8 6L4 15M8 6l4 9M6 10h4M5 13h6M3 15.500h10" stroke="#000070" />
          </Ico>
          <span>收002583分笔</span>
        </div>
      </div>
      <div className="h-[5px] border-t-2 border-b border-t-[#a0a0a0] border-b-[#f0f0f0] bg-white" />
      <div className="flex h-[17px] items-center border-t border-b border-[#a0a0a0] pl-[2px]">
        <span className="mr-1 h-[15px] w-[2px] border-r border-[#a0a0a0]" />
        <p className="flex-1 border-l border-[#a0a0a0] pl-px leading-[15px]">
          [五月初三] 时间:20230620 开:5.9400 高:5.9400 低:5.8300 收:5.8800 手:117494 额:68997600.00 换:0.00 涨:-0.84 盘:0 标:6.4539
        </p>
        <span className="mr-1 h-[15px] w-[2px] border-r border-[#a0a0a0]" />
      </div>
      <div className="h-px bg-white" />
    </footer>
  );
}

export default function App() {
  return (
    <div className='flex min-h-screen flex-col overflow-hidden border-t border-black bg-[#1c1c1c] font-["Noto_Sans","Noto_Sans_CJK_SC",sans-serif] text-xs text-black'>
      <div className="bg-[#f0f0f0]">
        <TitleBar />
        <MenuBar />
        <Toolbars />
        <Chart />
        <StatusBars />
      </div>
    </div>
  );
}
